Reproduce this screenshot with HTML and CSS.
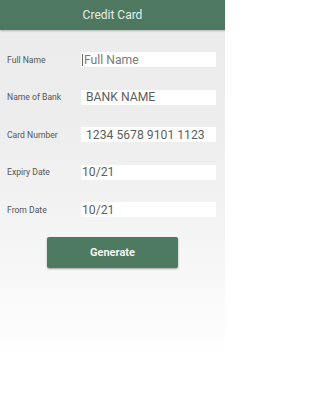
FILE: index.html
```html
<!DOCTYPE html>
<html>
<head>
<meta charset="utf-8">
<link rel="stylesheet" href="styles.css">
</head>
<body>
<div class="screen">
  <div class="appbar">Credit Card</div>
  <div class="form">
    <div class="row">
      <div class="label">Full Name</div>
      <div class="field placeholder"><span class="cursor"></span>Full Name</div>
    </div>
    <div class="row">
      <div class="label">Name of Bank</div>
      <div class="field pad">BANK NAME</div>
    </div>
    <div class="row">
      <div class="label">Card Number</div>
      <div class="field pad">1234 5678 9101 1123</div>
    </div>
    <div class="row">
      <div class="label">Expiry Date</div>
      <div class="field">10/21</div>
    </div>
    <div class="row">
      <div class="label">From Date</div>
      <div class="field">10/21</div>
    </div>
  </div>
  <div class="actions">
    <button class="btn">Generate</button>
  </div>
</div>
</body>
</html>
```

FILE: styles.css
```css
html, body {
  margin: 0;
  padding: 0;
}
body {
  width: 225px;
  height: 400px;
  font-family: Roboto, "Noto Sans", sans-serif;
  overflow: hidden;
}
.screen {
  height: 400px;
  background: linear-gradient(to bottom, #ececec 0px, #ededed 120px, #f6f6f6 260px, #ffffff 360px);
  display: flex;
  flex-direction: column;
}
.appbar {
  height: 30px;
  background: #4e7960;
  color: #e6efe6;
  font-size: 12px;
  display: flex;
  align-items: center;
  justify-content: center;
  box-shadow: 0 1px 2px rgba(0,0,0,0.25);
}
.form {
  display: flex;
  flex-direction: column;
  gap: 22.5px;
  padding: 22px 9px 0 7px;
}
.row {
  display: flex;
  align-items: center;
  height: 15px;
}
.label {
  width: 74px;
  font-size: 8.6px;
  color: #555;
}
.field {
  flex: 1;
  height: 15px;
  background: #fff;
  font-size: 12.2px;
  color: #5e5e5e;
  display: flex;
  align-items: center;
  padding-left: 1px;
  box-sizing: border-box;
}
.field.pad {
  padding-left: 5px;
}
.field.placeholder {
  color: #7a7a7a;
  padding-left: 1px;
}
.cursor {
  width: 1px;
  height: 12px;
  background: #666;
  margin-right: 1px;
}
.actions {
  display: flex;
  justify-content: center;
  padding-top: 20px;
}
.btn {
  width: 131px;
  height: 31px;
  background: #4f7a62;
  color: #f2f5f2;
  border: none;
  border-radius: 2px;
  font-family: Roboto, "Noto Sans", sans-serif;
  font-size: 11px;
  font-weight: bold;
  box-shadow: 0 1px 2px rgba(0,0,0,0.35);
  padding: 0;
}
```
